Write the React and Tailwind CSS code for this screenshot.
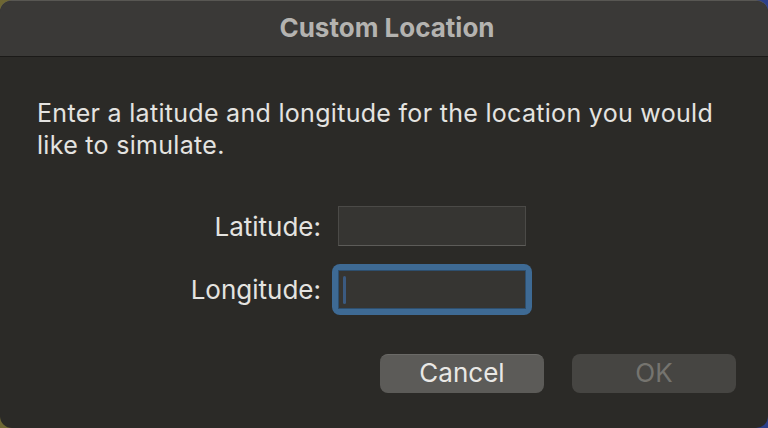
export default function App() {
	return (
		<div className="w-[768px] h-[428px] bg-[linear-gradient(90deg,#6e6733_0%,#3a3a40_60%,#2c3f8a_100%)] font-['Inter',sans-serif]">
			<div className="w-full h-full flex flex-col rounded-[12px] overflow-hidden border-t border-t-[#77767299] bg-[#2b2a27]">
				{/* title bar */}
				<div className="h-[56px] flex items-center justify-center pl-[6px] bg-[#3a3937] border-b border-b-[#1b1a18]">
					<h1 className="text-[26px] font-bold text-[#b4b3b0] mt-[-2px]">Custom Location</h1>
				</div>

				<div className="flex-1 flex flex-col pl-[37px] pr-[32px] pt-[40px]">
					<p className="text-[25px] leading-[32px] tracking-[0.3px] text-[#e4e3e0]">
						Enter a latitude and longitude for the location you would like to simulate.
					</p>

					<div className="mt-[45px] flex flex-col gap-[18px]">
						<div className="flex items-center">
							<label className="w-[284px] text-right text-[26px] text-[#e4e3e0]">Latitude:</label>
							<div className="ml-[17px] w-[188px] h-[40px] bg-[#363532] border border-[#4b4a47] border-b-[#5d5c59]" />
						</div>
						<div className="flex items-center">
							<label className="w-[284px] text-right text-[26px] text-[#e4e3e0]">Longitude:</label>
							<div className="ml-[11px] p-[6px] rounded-[8px] bg-[#3e6a94]">
								<div className="w-[188px] h-[39px] bg-[#363532] border border-[#2e4f6e] flex items-center pl-[4px]">
									<div className="w-[3px] h-[28px] rounded-full bg-[#3b5a80]" />
								</div>
							</div>
						</div>
					</div>

					<div className="mt-[39px] flex justify-end gap-[28px]">
						<button className="w-[164px] h-[39px] pb-[3px] rounded-[8px] bg-[#5c5b58] border-t border-t-[#6b6a67] text-[26px] text-[#e9e8e5] flex items-center justify-center">
							Cancel
						</button>
						<button className="w-[164px] h-[39px] pb-[3px] rounded-[8px] bg-[#464542] text-[26px] text-[#75746f] flex items-center justify-center">
							OK
						</button>
					</div>
				</div>
			</div>
		</div>
	)
}
